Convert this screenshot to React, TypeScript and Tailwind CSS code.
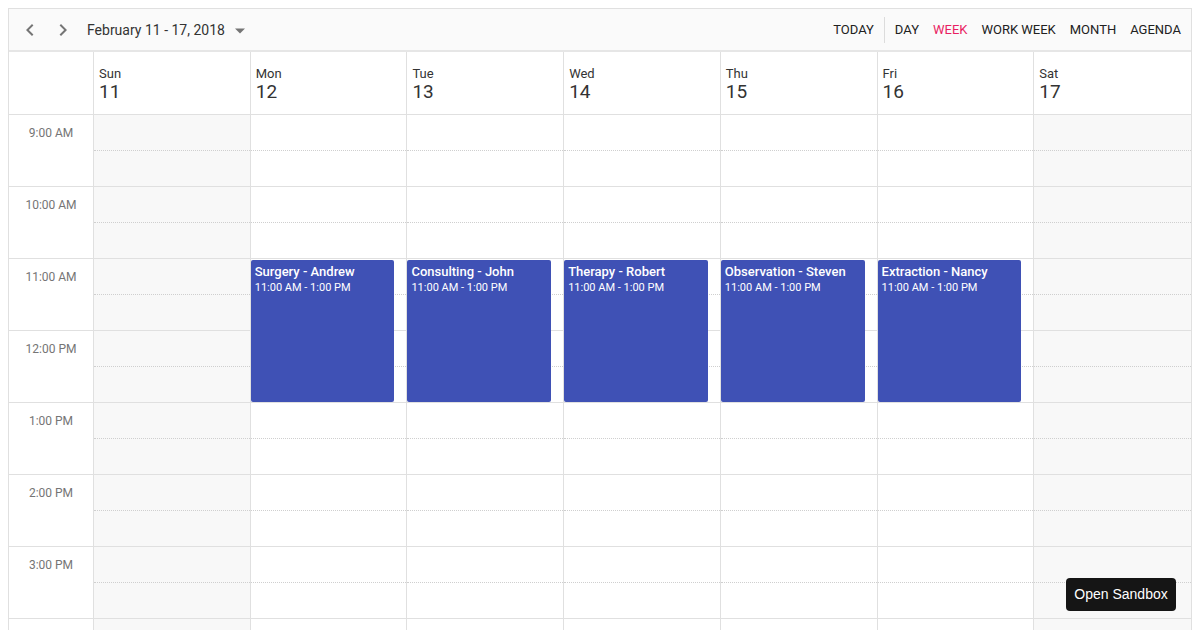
import React from "react";

const days = [
  { name: "Sun", num: 11, weekend: true },
  { name: "Mon", num: 12 },
  { name: "Tue", num: 13 },
  { name: "Wed", num: 14 },
  { name: "Thu", num: 15 },
  { name: "Fri", num: 16 },
  { name: "Sat", num: 17, weekend: true },
];

const hours = ["9:00 AM", "10:00 AM", "11:00 AM", "12:00 PM", "1:00 PM", "2:00 PM", "3:00 PM", ""];

const events: Record<number, string> = {
  1: "Surgery - Andrew",
  2: "Consulting - John",
  3: "Therapy - Robert",
  4: "Observation - Steven",
  5: "Extraction - Nancy",
};

function Chevron({ dir }: { dir: "left" | "right" }) {
  return (
    <svg width="24" height="24" viewBox="0 0 24 24" fill="#757575">
      {dir === "left" ? (
        <path d="M15.41 7.41L14 6l-6 6 6 6 1.41-1.41L10.83 12z" />
      ) : (
        <path d="M10 6L8.59 7.41 13.17 12l-4.58 4.59L10 18l6-6z" />
      )}
    </svg>
  );
}

export default function App() {
  return (
    <div className="min-h-screen bg-white font-['Roboto',sans-serif] text-[#212121]">
      <div className="m-2 border border-[#e0e0e0]">
        {/* Toolbar */}
        <div className="flex h-[43px] items-center justify-between border-b-2 border-[#e6e6e6] bg-[#fafafa] pt-px">
          <div className="flex items-center">
            <button className="flex h-[42px] w-[42px] items-center justify-center">
              <Chevron dir="left" />
            </button>
            <button className="-ml-[9px] flex h-[42px] w-[42px] items-center justify-center">
              <Chevron dir="right" />
            </button>
            <span className="ml-[3px] text-[14px] text-[#333]">February 11 - 17, 2018</span>
            <svg className="ml-[9px]" width="12" height="12" viewBox="0 0 12 12">
              <path d="M1 4.5h10L6 9.5z" fill="#757575" />
            </svg>
          </div>
          <div className="flex items-center pr-[3px] text-[13px] uppercase">
            <span className="px-[7px]">Today</span>
            <span className="mx-[3px] h-[26px] w-px bg-[#dcdcdc]" />
            <span className="px-[7px]">Day</span>
            <span className="px-[7px] text-[#e91e63]">Week</span>
            <span className="px-[7px]">Work Week</span>
            <span className="px-[7px]">Month</span>
            <span className="px-[7px]">Agenda</span>
          </div>
        </div>

        {/* Header */}
        <div className="grid grid-cols-[85px_repeat(7,1fr)] border-b border-[#e0e0e0]">
          <div className="h-[62px] border-r border-[#e0e0e0]" />
          {days.map((d, i) => (
            <div
              key={d.name}
              className={`h-[62px] pl-[5px] pt-[14px] ${i < 6 ? "border-r border-[#e0e0e0]" : ""}`}
            >
              <div className="text-[13px] leading-[15px] text-[#333]">{d.name}</div>
              <div className="text-[19px] leading-[22px] text-[#333]">{d.num}</div>
            </div>
          ))}
        </div>

        {/* Body */}
        <div className="grid grid-cols-[85px_repeat(7,1fr)]">
          <div className="border-r border-[#e0e0e0]">
            {hours.map((h, k) => (
              <div
                key={k}
                className="h-[72px] border-b border-[#e0e0e0] pt-[9px] text-center text-[12px] text-[#757575]"
              >
                {h}
              </div>
            ))}
          </div>
          {days.map((d, i) => (
            <div
              key={d.name}
              className={`relative ${i < 6 ? "border-r border-[#e0e0e0]" : ""} ${d.weekend ? "bg-[#f8f8f8]" : "bg-white"}`}
            >
              {hours.map((h, k) => (
                <div key={k} className="h-[72px] border-b border-[#e0e0e0]">
                  <div className="h-[36px] border-b border-dotted border-[#cfcfcf]" />
                </div>
              ))}
              {events[i] && (
                <div className="absolute left-0 right-[12px] top-[145px] h-[142px] rounded-[2px] bg-[#3f51b5] px-[4px] pt-[4px] text-white">
                  <div className="text-[13px] font-medium leading-[15px]">{events[i]}</div>
                  <div className="text-[11px] leading-[18px]">11:00 AM - 1:00 PM</div>
                </div>
              )}
            </div>
          ))}
        </div>
      </div>

      <button className="fixed bottom-[19px] right-[24px] h-[33px] w-[110px] rounded-[4px] bg-[#151515] font-['Liberation_Sans',sans-serif] text-[14px] text-white">
        Open Sandbox
      </button>
    </div>
  );
}
